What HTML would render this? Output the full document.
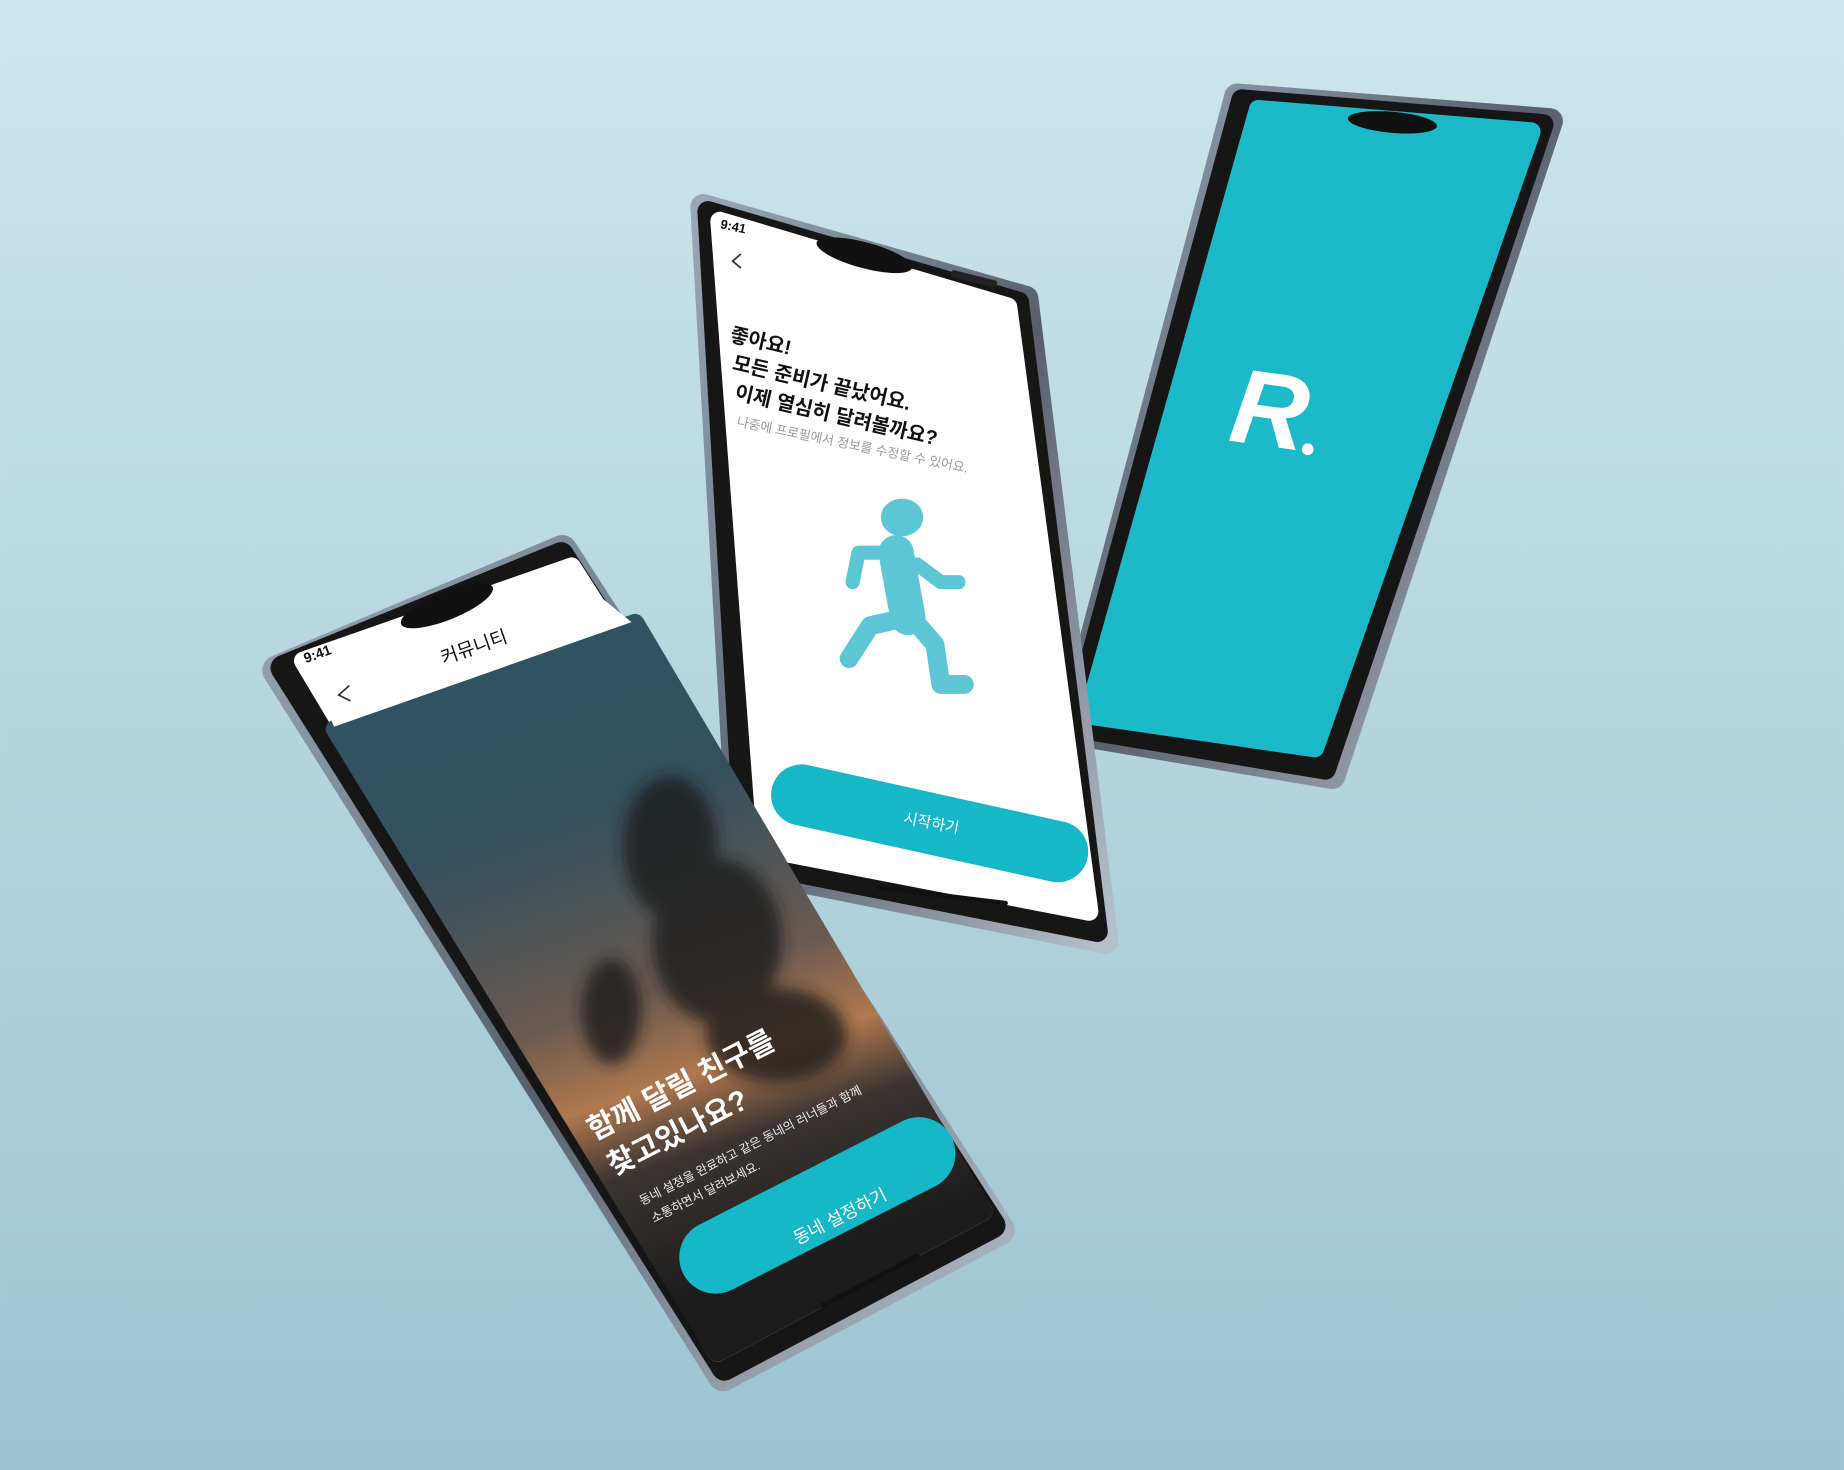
<!DOCTYPE html>
<html><head><meta charset="utf-8"><style>
html,body{margin:0;padding:0;width:1844px;height:1470px;overflow:hidden}
svg{display:block}
text{font-family:"Liberation Sans","Noto Sans CJK KR",sans-serif}
</style></head><body>
<svg width="1844" height="1470" viewBox="0 0 1568 1250" xmlns="http://www.w3.org/2000/svg">
<defs>
<linearGradient id="bg" x1="0" y1="0" x2="0" y2="1"><stop offset="0" stop-color="#cde6eb"/><stop offset="1" stop-color="#9cc4d1"/></linearGradient>
<linearGradient id="metal" x1="0" y1="0" x2="1" y2="1"><stop offset="0" stop-color="#9aa8b6"/><stop offset=".5" stop-color="#56606c"/><stop offset="1" stop-color="#b4c0cc"/></linearGradient>
<linearGradient id="photo" x1="0" y1="0" x2="0.3" y2="1"><stop offset="0" stop-color="#2c5566"/><stop offset=".35" stop-color="#35505c"/><stop offset=".6" stop-color="#6a5a50"/><stop offset=".72" stop-color="#b0784e"/><stop offset=".82" stop-color="#3a3431"/><stop offset="1" stop-color="#1c1c1c"/></linearGradient>
<clipPath id="c1"><path d="M278,622 L540,530 L850,1040 L605,1165 Z"/></clipPath>
<filter id="bl"><feGaussianBlur stdDeviation="6"/></filter>
</defs>
<rect width="1568" height="1250" fill="url(#bg)"/>

<!-- Phone 3 -->
<path d="M1052,82 L1318,103 L1133,660 L908,622 Z" fill="url(#metal)" stroke="url(#metal)" stroke-width="22" stroke-linejoin="round"/>
<path d="M1056,85 L1312,106 L1127,654 L912,618 Z" fill="#161617" stroke="#161617" stroke-width="18" stroke-linejoin="round"/>
<path d="M1070,93 L1302,112 L1118,636 L925,608 Z" fill="#1cb9c8" stroke="#1cb9c8" stroke-width="16" stroke-linejoin="round"/>
<ellipse cx="1184" cy="104" rx="38" ry="9" transform="rotate(5 1184 104)" fill="#111"/>
<text x="1048" y="380" font-size="90" font-weight="bold" font-style="italic" fill="#fff" transform="rotate(8 1085 345)">R</text>
<circle cx="1112" cy="382" r="5" fill="#fff"/>

<!-- Phone 2 -->
<path d="M598,176 L872,254 L940,800 L630,738 Z" fill="url(#metal)" stroke="url(#metal)" stroke-width="22" stroke-linejoin="round"/>
<path d="M602,180 L866,257 L933,792 L634,733 Z" fill="#161617" stroke="#161617" stroke-width="18" stroke-linejoin="round"/>
<path d="M612,188 L857,261 L926,775 L652,722 Z" fill="#fff" stroke="#fff" stroke-width="16" stroke-linejoin="round"/>
<ellipse cx="735" cy="217" rx="42" ry="11" transform="rotate(15 735 217)" fill="#111"/>
<text x="612" y="194" font-size="11" font-weight="bold" fill="#111" transform="rotate(12 612 194)">9:41</text>
<path d="M630,216 L623,222 L630,228" stroke="#333" stroke-width="1.5" fill="none"/>
<rect x="808" y="234" width="40" height="6" fill="#222" transform="rotate(14 828 238)" rx="2"/>
<g fill="#111" font-weight="bold" font-size="17">
<text x="620" y="290" transform="rotate(13 620 290)">좋아요!</text>
<text x="622" y="314" transform="rotate(13 622 314)">모든 준비가 끝났어요.</text>
<text x="624" y="339" transform="rotate(13 624 339)">이제 열심히 달려볼까요?</text>
</g>
<text x="626" y="362" font-size="11" fill="#999" transform="rotate(11.5 626 362)">나중에 프로필에서 정보를 수정할 수 있어요.</text>
<g stroke="#5cc6d4" stroke-linecap="round" stroke-linejoin="round" fill="none">
<path d="M762,470 L772,525" stroke-width="30"/>
<path d="M765,470 L730,470 L725,495" stroke-width="12"/>
<path d="M780,480 L800,495 L815,495" stroke-width="12"/>
<path d="M772,525 L740,532 L722,560" stroke-width="16"/>
<path d="M775,525 L795,548 L800,582 L820,582" stroke-width="16"/>
</g>
<ellipse cx="767" cy="440" rx="18" ry="16" fill="#5cc6d4"/>
<rect x="653" y="674" width="275" height="52" rx="26" fill="#16b7c7" transform="rotate(12.5 790 700)"/>
<text x="768" y="704" font-size="13" fill="#fff" transform="rotate(11 790 700)">시작하기</text>
<path d="M748,755 L855,768" stroke="#111" stroke-width="4" stroke-linecap="round"/>

<!-- Phone 1 -->
<path d="M236,570 L478,468 L850,1046 L615,1170 Z" fill="url(#metal)" stroke="url(#metal)" stroke-width="26" stroke-linejoin="round"/>
<path d="M241,568 L477,472 L844,1042 L616,1163 Z" fill="#161617" stroke="#161617" stroke-width="22" stroke-linejoin="round"/>
<path d="M258,562 L486,482 L836,1030 L610,1150 Z" fill="#fff" stroke="#fff" stroke-width="16" stroke-linejoin="round"/>
<path d="M285,620 L540,530 L836,1030 L610,1150 Z" fill="url(#photo)" stroke="url(#photo)" stroke-width="16" stroke-linejoin="round"/>
<g clip-path="url(#c1)" filter="url(#bl)" fill="#1a1c1e" opacity=".8">
<ellipse cx="570" cy="720" rx="40" ry="60"/>
<ellipse cx="610" cy="800" rx="55" ry="70"/>
<ellipse cx="520" cy="860" rx="25" ry="45"/>
<ellipse cx="660" cy="880" rx="60" ry="40"/>
</g>
<path d="M262,566 L484,486 L537,529 L284,618 Z" fill="#fff"/>
<ellipse cx="380" cy="515" rx="42" ry="12" transform="rotate(-22 380 515)" fill="#111"/>
<text x="260" y="564" font-size="12" font-weight="bold" fill="#111" transform="rotate(-20 260 564)">9:41</text>
<text x="377" y="565" font-size="16" fill="#111" transform="rotate(-19 377 565)">커뮤니티</text>
<path d="M297,583 L288,591 L298,596" stroke="#333" stroke-width="1.5" fill="none"/>
<g fill="#fff" font-weight="bold" font-size="25">
<text x="505" y="970" transform="rotate(-27 505 970)">함께 달릴 친구를</text>
<text x="522" y="1000" transform="rotate(-27 522 1000)">찾고있나요?</text>
</g>
<g fill="#eee" font-size="10.5">
<text x="546" y="1025" transform="rotate(-27 546 1025)">동네 설정을 완료하고 같은 동네의 러너들과 함께</text>
<text x="556" y="1040" transform="rotate(-27 556 1040)">소통하면서 달려보세요.</text>
</g>
<rect x="567" y="994" width="256" height="62" rx="31" fill="#16b7c7" transform="rotate(-27 695 1025)"/>
<text x="665" y="1045" font-size="15" fill="#fff" transform="rotate(-27 700 1025)">동네 설정하기</text>
<path d="M700,1110 L780,1068" stroke="#111" stroke-width="4" stroke-linecap="round"/>
</svg>
</body></html>
